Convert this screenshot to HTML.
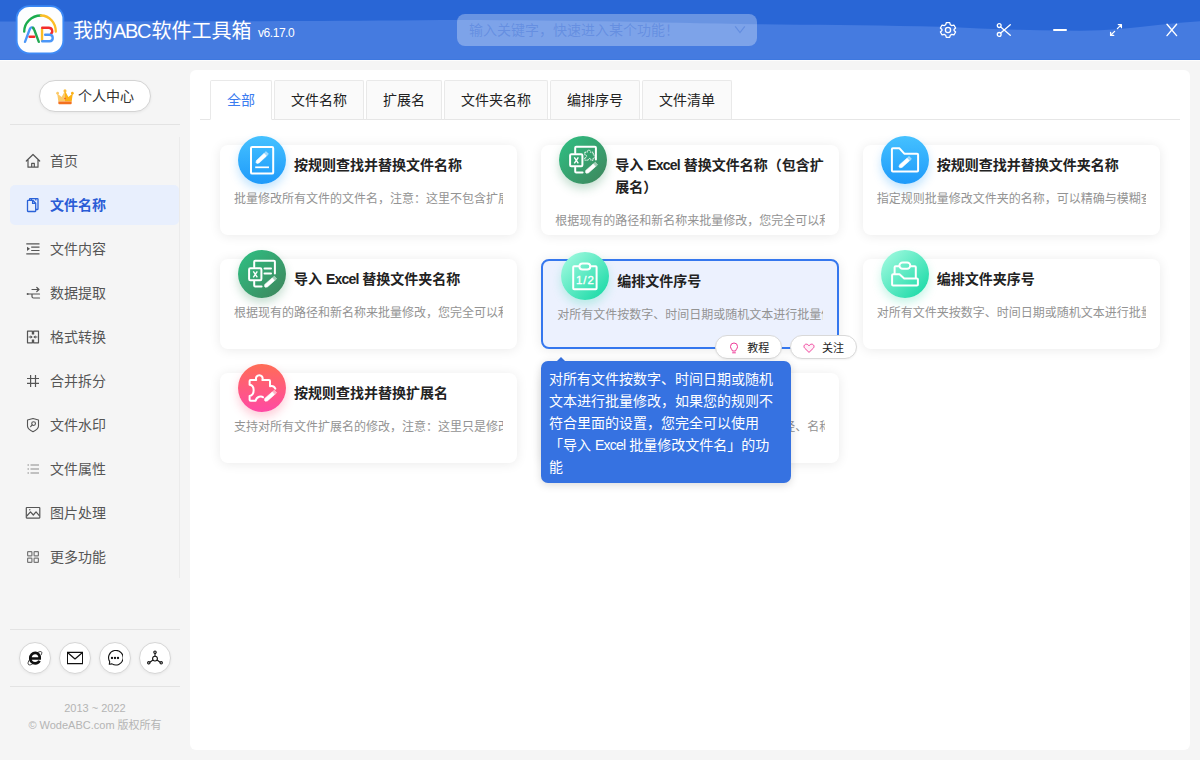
<!DOCTYPE html>
<html lang="zh-CN">
<head>
<meta charset="utf-8">
<title>我的ABC软件工具箱</title>
<style>
*{box-sizing:border-box;margin:0;padding:0}
html,body{width:1200px;height:760px;overflow:hidden}
body{background:#f5f5f5;font-family:"Liberation Sans","Noto Sans CJK SC",sans-serif;font-size:14px;color:#333;position:relative}
.abs{position:absolute}
/* header */
#hd{position:absolute;left:0;top:0;width:1200px;height:60px;background:#457be0;overflow:hidden}
#hd svg.wave{position:absolute;left:0;top:0}
#logo{position:absolute;left:10px;top:0;width:60px;height:60px}
#title{position:absolute;left:73px;top:14.800px;font-size:20px;line-height:32px;color:#fff;white-space:nowrap}
#title i{font-style:normal;letter-spacing:-1.3px;margin-right:1.3px}
#ver{position:absolute;left:258px;top:24px;font-size:12px;line-height:18px;color:#fff;white-space:nowrap;letter-spacing:-0.450px}
#search{position:absolute;left:457px;top:14px;width:300px;height:32px;border-radius:8px;background:rgba(255,255,255,.3);color:rgba(45,95,205,.3);font-size:14px;line-height:32px;padding-left:12px;white-space:nowrap}
.hi{position:absolute;top:22px;width:16px;height:16px}
/* sidebar */
#user{position:absolute;left:39px;top:80px;width:112px;height:32px;border:1px solid #d4d4d4;border-radius:16px;background:#fff;font-size:14px;line-height:30px;color:#333;white-space:nowrap;box-shadow:0 1px 3px rgba(0,0,0,.06)}
#user span{position:absolute;left:38px;top:0}
.sep{position:absolute;left:10px;width:170px;height:1px;background:#e3e3e3}
#menu{position:absolute;left:10px;top:137px;width:170px;height:441px;border-right:1px solid #ebebeb}
.mi{position:absolute;left:0;width:168.700px;height:40px;border-radius:5px;font-size:14px;line-height:40px;color:#555;white-space:nowrap}
.mi span{position:absolute;left:40px;top:0}
.mi svg{position:absolute;left:15px;top:12px;width:16px;height:16px}
.mi.on{background:#e8effd;color:#2a5cd6;font-weight:bold}
.circ{position:absolute;top:642px;width:32px;height:32px;border-radius:16px;border:1px solid #d6d6d6;background:#fff;box-shadow:0 1px 3px rgba(0,0,0,.06)}
.circ svg{position:absolute;left:7px;top:7px;width:16px;height:16px}
.foot{position:absolute;left:0;width:190px;text-align:center;font-size:11px;line-height:16px;color:#b4b4b4;white-space:nowrap}
/* main */
#main{position:absolute;left:190px;top:70px;width:1000px;height:680px;background:#fff;border-radius:6px}
#tabline{position:absolute;left:200px;top:119px;width:980px;height:1px;background:#e6e6e6}
.tab{position:absolute;top:80px;height:40px;border:1px solid #e9e9e9;border-bottom:1px solid #e6e6e6;border-radius:2px 2px 0 0;background:#fafafa;font-size:14px;line-height:38px;text-align:center;color:#222;white-space:nowrap}
.tab.on{background:#fff;color:#3b7cf0;border-bottom-color:#fff}
.card{position:absolute;width:297.33px;height:90px;border-radius:8px;background:#fff;box-shadow:0 1px 12px rgba(0,0,0,.085)}
.card.sel{border:2px solid #3577ee;background:#ecf1fe}
.ic{position:absolute;left:18px;top:-9px;width:48px;height:48px;border-radius:24px}
.ic svg{position:absolute;left:0;top:0;width:48px;height:48px}
.ic.blue{background:linear-gradient(180deg,#45c1ff,#1e9afa);box-shadow:0 5px 10px rgba(40,160,250,.28)}
.ic.green{background:linear-gradient(135deg,#30bb80 10%,#3e875d 95%);box-shadow:0 5px 10px rgba(50,140,90,.28)}
.ic.mint{background:linear-gradient(135deg,#9df9de 8%,#1cdaa7 92%);box-shadow:0 5px 10px rgba(50,220,170,.28)}
.ic.pink{background:linear-gradient(180deg,#ff6c56,#ff49a4);box-shadow:0 5px 10px rgba(250,80,120,.28)}
.tt{position:absolute;left:74px;top:9px;width:216px;font-size:14px;line-height:22px;font-weight:bold;color:#222}
.tt i{font-style:normal;letter-spacing:-0.8px}
.ds{position:absolute;left:14px;right:14px;height:18px;overflow:hidden;white-space:nowrap;font-size:12px;line-height:18px;color:#939393}
.pill{position:absolute;top:335.4px;height:23.3px;width:66.6px;border:1px solid #d9d9d9;border-radius:12px;background:#fff;font-size:11px;line-height:21.3px;color:#222;white-space:nowrap;box-shadow:0 1px 2px rgba(0,0,0,.05)}
.pill span{position:absolute;left:31px;top:1.500px}
.pill svg{position:absolute;left:12px;top:5.200px;width:12px;height:12px}
#tip{position:absolute;left:541px;top:361px;width:250px;height:122px;border-radius:7px;background:#3672e1;color:#fff;font-size:14px;line-height:22px;padding:6.700px 8px 0 8px;box-shadow:0 2px 8px rgba(0,0,0,.15)}
#tip i{font-style:normal;letter-spacing:-0.750px}
#tiparrow{position:absolute;left:556.500px;top:357px;width:0;height:0;border-left:4px solid transparent;border-right:4px solid transparent;border-bottom:4.500px solid #3672e1}
</style>
</head>
<body>
<div id="hd">
<svg class="wave" width="1200" height="60" viewBox="0 0 1200 60"><path d="M0 0H1200V21.3L1180 22.8L1160 24.8L1140 26.9L1120 29.0L1100 30.3L1080 30.8L1060 30.6L1040 30.3L1020 29.8L1000 29.2L980 28.4L960 27.4L940 26.7L920 26.2L900 25.9L880 25.6L860 25.3L840 25.1L820 24.8L800 24.7L780 24.4L760 24.2L740 23.9L720 23.6L700 23.2L680 22.8L660 22.4L640 22.0L620 21.6L600 21.3L580 21.0L560 20.7L540 20.5L520 20.3L500 20.2L480 20.1L460 20.1L440 20.1L420 20.3L400 20.4L380 20.6L360 20.7L340 20.8L320 20.9L300 21.1L280 21.1L260 21.2L240 21.2L220 21.3L200 21.3L180 21.3L160 21.3L140 21.3L120 21.4L100 21.4L80 21.4L60 21.4L40 21.4L20 21.4L0 21.4Z" fill="#2966d6"/></svg>
<svg id="logo" viewBox="0 0 760 760" fill="none" stroke-linecap="round" stroke-linejoin="round">
<rect x="72" y="66" width="616" height="620" rx="172" fill="#3d8cf8" opacity=".9"/>
<rect x="96" y="88" width="568" height="576" rx="150" fill="#fdfeff"/>
<path d="M180 400C180 290 270 198 390 196" stroke="#1aac4e" stroke-width="30"/>
<path d="M392 196C500 198 580 290 580 400" stroke="#fbbd26" stroke-width="30"/>
<path d="M190 530L250 370C262 340 285 340 297 362" stroke="#4a96f8" stroke-width="30"/>
<path d="M290 350C300 356 306 372 312 390L365 530" stroke="#22a853" stroke-width="30"/>
<path d="M248 466H308" stroke="#f42c2c" stroke-width="30"/>
<path d="M406 365V515" stroke="#fbbd26" stroke-width="30"/>
<path d="M408 352H490C540 352 545 410 520 425" stroke="#f42c2c" stroke-width="30"/>
<path d="M445 440H500C555 440 555 522 500 522H408" stroke="#4a96f8" stroke-width="30"/>
</svg>
<div id="title">我的<i>ABC</i>软件工具箱</div>
<div id="ver">v6.17.0</div>
<div id="search">输入关键字，快速进入某个功能！</div>
<svg class="abs" style="left:939px;top:21px" width="18" height="18" viewBox="0 0 18 18" fill="none" stroke="#fff" stroke-width="1.3" stroke-linejoin="round"><path d="M7.300 1.600H10.700L11.300 3.700L12.800 4.600L14.900 4.050L16.600 7L15.050 8.500V9.500L16.600 11L14.900 13.950L12.800 13.400L11.300 14.300L10.700 16.400H7.300L6.700 14.300L5.200 13.400L3.100 13.950L1.400 11L2.950 9.500V8.500L1.400 7L3.100 4.050L5.200 4.600L6.700 3.700Z"/><circle cx="9" cy="9" r="2.600"/></svg>
<svg class="abs" style="left:996px;top:22px" width="16" height="16" viewBox="0 0 16 16" fill="none" stroke="#fff" stroke-width="1.300" stroke-linecap="round"><circle cx="3.200" cy="3.600" r="1.900"/><circle cx="3.200" cy="12.400" r="1.900"/><path d="M4.700 4.900L14.300 13.300M4.700 11.100L14.300 2.700"/></svg>
<div class="abs" style="left:1053px;top:29px;width:14px;height:2px;background:#fff;border-radius:1px"></div>
<svg class="abs" style="left:1108px;top:22px" width="16" height="16" viewBox="0 0 16 16" fill="none" stroke="#fff" stroke-width="1.300" stroke-linecap="round" stroke-linejoin="round"><path d="M2.600 13.400L6.600 9.400M9.400 6.600L13.400 2.600M10.300 2.600H13.400V5.700M2.600 10.300V13.400H5.700"/></svg>
<svg class="abs" style="left:1165px;top:23px" width="14" height="14" viewBox="0 0 14 14" fill="none" stroke="#fff" stroke-width="1.400" stroke-linecap="round"><path d="M2 1.200L11.600 12.600M11.600 1.200L2 12.600"/></svg>
<svg class="abs" style="left:734px;top:25px" width="12" height="10" viewBox="0 0 12 10" fill="none" stroke="rgba(45,95,205,.32)" stroke-width="1.100"><path d="M1.200 1.300L6 7.700L10.800 1.300"/></svg>
</div>

<div class="abs" style="left:0;top:59px;width:1200px;height:1px;background:#3e78df"></div><div class="abs" style="left:0;top:60px;width:1200px;height:1px;background:#fdfdfd"></div>
<div id="user"><svg class="abs" style="left:16px;top:8px" width="18" height="16.500" viewBox="0 0 20 17" preserveAspectRatio="none"><path d="M2.600 12.800L1.300 4.600L6.300 8.200L10 1.800V12.800Z" fill="#fcc966"/><path d="M17.400 12.800L18.700 4.600L13.700 8.200L10 1.800V12.800Z" fill="#fcb116"/><circle cx="1.800" cy="4.300" r="1.500" fill="#fcc966"/><circle cx="18.200" cy="4.300" r="1.500" fill="#fcb116"/><circle cx="10" cy="2" r="1.700" fill="#fcbd3a"/><path d="M2.600 12.800H17.400V14.600Q17.400 15.600 16.400 15.600H3.600Q2.600 15.600 2.600 14.600Z" fill="#f3701e"/><path d="M10 8.700L10.900 9.800L10 10.900L9.100 9.800Z" fill="#ec3b2f"/></svg><span>个人中心</span></div>
<div class="sep" style="top:124px"></div>
<div id="menu">
<div class="mi" style="top:4px"><svg viewBox="0 0 16 16" fill="none" stroke="#555" stroke-width="1.200" stroke-linecap="round" stroke-linejoin="round"><path d="M1.300 8L8 1.500L14.700 8M3 6.800V14.200H13V6.800M6.700 14V10.300H9.300V14"/></svg><span>首页</span></div>
<div class="mi on" style="top:48px"><svg viewBox="0 0 16 16" fill="none" stroke="#2a62d8" stroke-width="1.300" stroke-linejoin="round"><path d="M4.500 3.300V2.200Q4.500 1.700 5 1.700H12.500Q13 1.700 13 2.200V12Q13 12.500 12.500 12.500H10.700"/><path d="M2.500 3.800Q2.500 3.300 3 3.300H7.800L10.700 6.200V14Q10.700 14.500 10.200 14.500H3Q2.500 14.500 2.500 14Z"/><path d="M7.600 3.500V6.400H10.500"/><path d="M6.400 1.700V3M10.800 1.700V3.400"/></svg><span>文件名称</span></div>
<div class="mi" style="top:92px"><svg viewBox="0 0 16 16" fill="none" stroke="#555" stroke-width="1.200"><path d="M1.300 2.900H14.500M6.200 6.200H14.500M6.200 9.500H14.500M1.300 12.900H14.500"/><path d="M2 5.800L5 7.850L2 9.900Z" fill="#555" stroke="none"/></svg><span>文件内容</span></div>
<div class="mi" style="top:136px"><svg viewBox="0 0 16 16" fill="none" stroke="#555" stroke-width="1.200" stroke-linecap="round" stroke-linejoin="round"><path d="M7 4.500H14M11.800 2.500L14 4.500L11.800 6.500"/><path d="M3.300 9H14.500M7 9V11.500Q7 13 8.500 13H14.500"/><circle cx="2.600" cy="9" r="1" fill="#555" stroke="none"/></svg><span>数据提取</span></div>
<div class="mi" style="top:180px"><svg viewBox="0 0 16 16" fill="none" stroke="#555" stroke-width="1.200" stroke-linejoin="round"><path d="M7.400 5.400V2.200H2.500V13.800H7.400V10.600M8.600 5.400V2.200H13.500V13.800H8.600V10.600"/><path d="M3.600 8H7.200M12.400 8H8.800" /><path d="M5.500 6.200L7.500 8L5.500 9.800ZM10.500 6.200L8.500 8L10.500 9.800Z" fill="#555" stroke="none"/></svg><span>格式转换</span></div>
<div class="mi" style="top:224px"><svg viewBox="0 0 16 16" fill="none" stroke="#555" stroke-width="1.200"><path d="M5.600 2V14M10.500 2V14M2 5.500H14M2 10.300H14"/></svg><span>合并拆分</span></div>
<div class="mi" style="top:268px"><svg viewBox="0 0 16 16" fill="none" stroke="#555" stroke-width="1.100" stroke-linejoin="round" stroke-linecap="round"><path d="M8 1.500L13.500 3V9Q13.500 12 8 14.700Q2.500 12 2.500 9V3Z"/><circle cx="8.600" cy="6.600" r="1.900"/><path d="M7.200 8L5.600 9.600"/></svg><span>文件水印</span></div>
<div class="mi" style="top:312px"><svg viewBox="0 0 16 16" fill="none" stroke="#8c8c8c" stroke-width="1.050"><path d="M5.500 4H14M5.500 8H14M5.500 12H14"/><path d="M2.500 4H4M2.500 8H4M2.500 12H4"/></svg><span>文件属性</span></div>
<div class="mi" style="top:356px"><svg viewBox="0 0 16 16" fill="none" stroke="#555" stroke-width="1.200" stroke-linejoin="round"><rect x="1.300" y="2.500" width="13.500" height="10.600" rx="0.500"/><path d="M1.800 11L5.500 6.800L8.300 10L11 6.800L14.500 10.800"/><circle cx="4.800" cy="4.800" r="0.700" fill="#555" stroke="none"/></svg><span>图片处理</span></div>
<div class="mi" style="top:400px"><svg viewBox="0 0 16 16" fill="none" stroke="#777" stroke-width="1.200" stroke-linejoin="round"><rect x="2.600" y="2.600" width="4.300" height="4.300" rx="0.700"/><rect x="9.100" y="2.600" width="4.300" height="4.300" rx="0.700"/><rect x="2.600" y="9.100" width="4.300" height="4.300" rx="0.700"/><rect x="9.100" y="9.100" width="4.300" height="4.300" rx="0.700"/></svg><span>更多功能</span></div>
</div>
<div class="sep" style="top:629px"></div>
<div class="circ" style="left:19px"><svg viewBox="0 0 16 16" fill="none" stroke="#111"><path d="M4.300 8.500H12.700C13 5 10.800 2.900 8.300 2.900C5.500 2.900 3.300 5.100 3.300 8.200C3.300 11 5.300 13.300 8.200 13.300C10.200 13.300 11.800 12.300 12.500 10.700" stroke-width="2.700"/><path d="M10.500 2.600C12.800 1.300 14.600 1.200 14.800 2.500C14.900 3.300 14.500 4.300 13.900 5.200M3 9C1 11.500 0.500 14 1.700 14.700C2.700 15.200 4.200 14.800 5.700 13.800" stroke-width="0.800"/></svg></div>
<div class="circ" style="left:59px"><svg viewBox="0 0 16 16" fill="none" stroke="#111" stroke-width="1.200" stroke-linejoin="round"><rect x="0.400" y="2.300" width="15.200" height="11.400"/><path d="M0.800 2.800L8 9L15.200 2.800"/></svg></div>
<div class="circ" style="left:99px"><svg viewBox="0 0 16 16" fill="none" stroke="#111" stroke-width="1.100" stroke-linejoin="round"><path d="M2.300 14.300L2.700 11.600A7.300 7.300 0 1 1 5 13.900Z"/><circle cx="5" cy="8" r="0.600" fill="#111"/><circle cx="8" cy="8" r="0.600" fill="#111"/><circle cx="11" cy="8" r="0.600" fill="#111"/></svg></div>
<div class="circ" style="left:139px"><svg viewBox="0 0 16 16" fill="none" stroke="#111" stroke-width="1.100"><circle cx="8" cy="8.600" r="2.400"/><circle cx="8" cy="2.200" r="1.200"/><circle cx="1.800" cy="12.800" r="1.200"/><circle cx="14.200" cy="12.800" r="1.200"/><path d="M8 3.400V6.200M6 10L2.800 12.200M10 10L13.200 12.200"/></svg></div>
<div class="sep" style="top:686px"></div>
<div class="foot" style="top:700px">2013 ~ 2022</div>
<div class="foot" style="top:717px">© WodeABC.com 版权所有</div>

<div id="main"></div>
<div id="tabline"></div>
<div class="tab on" style="left:210px;width:62px">全部</div>
<div class="tab" style="left:274px;width:90px">文件名称</div>
<div class="tab" style="left:366px;width:76px">扩展名</div>
<div class="tab" style="left:444px;width:104px">文件夹名称</div>
<div class="tab" style="left:550px;width:90px">编排序号</div>
<div class="tab" style="left:642px;width:90px">文件清单</div>

<div class="card" style="left:220px;top:145px"><div class="ic blue"><svg viewBox="0 0 48 48"><rect x="13" y="11" width="22.200" height="26.600" rx="1.200" stroke="#fff" fill="none" stroke-width="2" stroke-linejoin="round" stroke-linecap="round"/><path d="M18.92 27.47L20.99 27.05L28.63 19.89L26.17 17.26L18.53 24.42L17.97 26.45Z" fill="#fff" stroke="#fff" stroke-width="0.600" stroke-linejoin="round"/><path d="M29.00 19.55L30.53 18.11L28.07 15.49L26.54 16.92Z" fill="rgba(255,255,255,.5)" stroke="rgba(255,255,255,.5)" stroke-width="0.600" stroke-linejoin="round"/><path d="M17.200 31.300H31" stroke="#fff" stroke-width="1.700"/></svg></div><div class="tt">按规则查找并替换文件名称</div><div class="ds" style="top:45px">批量修改所有文件的文件名，注意：这里不包含扩展名</div></div>
<div class="card" style="left:541.33px;top:145px"><div class="ic green"><svg viewBox="0 0 48 48"><path d="M16.200 17V11.700Q16.200 10.700 17.200 10.700H35.900Q36.900 10.700 36.900 11.700V23.600M16.200 31.500V35.500Q16.200 36.500 17.200 36.500H23.600" stroke="#fff" fill="none" stroke-width="2" stroke-linejoin="round" stroke-linecap="round"/><rect x="11.100" y="18.300" width="12.300" height="11.900" rx="1.200" stroke="#fff" fill="none" stroke-width="2" stroke-linejoin="round" stroke-linecap="round"/><path d="M15.300 21.300L19.300 27.300M19.300 21.300L15.300 27.300" stroke="#fff" stroke-width="1.400" fill="none"/><path d="M25.800 16.200H28.300C27.300 13.500 32.300 13.500 31.300 16.200H34.200V19C36.800 18 36.800 22.800 34.200 21.800V24.200H31.800C32.500 21.900 28.700 21.900 29.400 24.200H25.800V21.500C28.200 22.200 28.200 18.300 25.800 19Z" stroke="#fff" fill="none" stroke-width="1" stroke-dasharray="1.300 0.700"/><path d="M27.31 37.29L29.39 36.93L36.74 30.47L34.36 27.77L27.01 34.23L26.39 36.24Z" fill="#fff" stroke="#fff" stroke-width="0.600" stroke-linejoin="round"/><path d="M37.11 30.14L38.69 28.75L36.31 26.05L34.73 27.44Z" fill="rgba(255,255,255,.5)" stroke="rgba(255,255,255,.5)" stroke-width="0.600" stroke-linejoin="round"/></svg></div><div class="tt">导入 <i>Excel</i> 替换文件名称（包含扩展名）</div><div class="ds" style="top:67px">根据现有的路径和新名称来批量修改，您完全可以利用</div></div>
<div class="card" style="left:862.67px;top:145px"><div class="ic blue"><svg viewBox="0 0 48 48"><path d="M10.900 13.300Q10.900 12.300 11.900 12.300H18.500L23.300 17.700H36.100Q37.100 17.700 37.100 18.700V34.600Q37.100 35.600 36.100 35.600H11.900Q10.900 35.600 10.900 34.600Z" stroke="#fff" fill="none" stroke-width="2" stroke-linejoin="round" stroke-linecap="round"/><path d="M18.91 31.79L20.99 31.43L28.54 24.77L26.16 22.07L18.61 28.73L17.99 30.74Z" fill="#fff" stroke="#fff" stroke-width="0.600" stroke-linejoin="round"/><path d="M28.92 24.44L30.49 23.05L28.11 20.35L26.53 21.74Z" fill="rgba(255,255,255,.5)" stroke="rgba(255,255,255,.5)" stroke-width="0.600" stroke-linejoin="round"/></svg></div><div class="tt">按规则查找并替换文件夹名称</div><div class="ds" style="top:45px">指定规则批量修改文件夹的名称，可以精确与模糊查找</div></div>

<div class="card" style="left:220px;top:259px"><div class="ic green"><svg viewBox="0 0 48 48"><path d="M16.200 17V11.700Q16.200 10.700 17.200 10.700H35.900Q36.900 10.700 36.900 11.700V23.600M16.200 31.500V35.500Q16.200 36.500 17.200 36.500H23.600" stroke="#fff" fill="none" stroke-width="2" stroke-linejoin="round" stroke-linecap="round"/><rect x="11.100" y="18.300" width="12.300" height="11.900" rx="1.200" stroke="#fff" fill="none" stroke-width="2" stroke-linejoin="round" stroke-linecap="round"/><path d="M15.300 21.300L19.300 27.300M19.300 21.300L15.300 27.300" stroke="#fff" stroke-width="1.400" fill="none"/><path d="M26.500 18.500H33M26.500 23.600H33" stroke="#fff" fill="none" stroke-width="2" stroke-linejoin="round" stroke-linecap="round"/><path d="M27.31 37.29L29.39 36.93L36.74 30.47L34.36 27.77L27.01 34.23L26.39 36.24Z" fill="#fff" stroke="#fff" stroke-width="0.600" stroke-linejoin="round"/><path d="M37.11 30.14L38.69 28.75L36.31 26.05L34.73 27.44Z" fill="rgba(255,255,255,.5)" stroke="rgba(255,255,255,.5)" stroke-width="0.600" stroke-linejoin="round"/></svg></div><div class="tt">导入 <i>Excel</i> 替换文件夹名称</div><div class="ds" style="top:45px">根据现有的路径和新名称来批量修改，您完全可以利用</div></div>
<div class="card sel" style="left:541.33px;top:259px"><div class="ic mint"><svg viewBox="0 0 48 48"><path d="M17.500 14.300H13.200Q12.200 14.300 12.200 15.300V36.300Q12.200 37.300 13.200 37.300H34.600Q35.600 37.300 35.600 36.300V15.300Q35.600 14.300 34.600 14.300H30.300" stroke="#fff" fill="none" stroke-width="2" stroke-linejoin="round" stroke-linecap="round"/><rect x="18.400" y="11.400" width="10.900" height="6.200" rx="3.100" stroke="#fff" fill="none" stroke-width="2" stroke-linejoin="round" stroke-linecap="round"/><text x="24.400" y="31.700" text-anchor="middle" font-family="Liberation Sans,sans-serif" font-size="11.500" fill="#fff" stroke="#fff" stroke-width="0.300" letter-spacing="0.900">1/2</text></svg></div><div class="tt">编排文件序号</div><div class="ds" style="top:45px">对所有文件按数字、时间日期或随机文本进行批量修改</div></div>
<div class="card" style="left:862.67px;top:259px"><div class="ic mint"><svg viewBox="0 0 48 48"><path d="M11.100 25.200Q11.100 24.200 12.100 24.200H18.500L23.200 28.400H35.900Q36.900 28.400 36.900 29.400V34.600Q36.900 35.600 35.900 35.600H12.100Q11.100 35.600 11.100 34.600Z" stroke="#fff" fill="none" stroke-width="2" stroke-linejoin="round" stroke-linecap="round"/><path d="M13.600 24V17.200Q13.600 16.200 14.600 16.200H18M30 16.200H33.800Q34.800 16.200 34.800 17.200V28" stroke="#fff" fill="none" stroke-width="2" stroke-linejoin="round" stroke-linecap="round"/><rect x="18.400" y="12.400" width="10.900" height="6.400" rx="3.200" stroke="#fff" fill="none" stroke-width="2" stroke-linejoin="round" stroke-linecap="round"/></svg></div><div class="tt">编排文件夹序号</div><div class="ds" style="top:45px">对所有文件夹按数字、时间日期或随机文本进行批量修改</div></div>

<div class="card" style="left:220px;top:373px"><div class="ic pink"><svg viewBox="0 0 48 48"><path d="M25 33.200C23.500 31.800 18.500 32 17.600 36.800H12.600Q11.600 36.800 11.600 35.800V31.900C17 31.200 17 21.400 11.600 20.800V17.100Q11.600 16.100 12.600 16.100H18.200C16.300 9.700 26.300 9.700 24.400 16.100H31Q32 16.100 32 17.100V22.300C34.500 21.700 36.300 22.600 37.300 24.600" stroke="#fff" fill="none" stroke-width="2" stroke-linejoin="round" stroke-linecap="round"/><path d="M27.31 37.29L29.39 36.93L36.74 30.47L34.36 27.77L27.01 34.23L26.39 36.24Z" fill="#fff" stroke="#fff" stroke-width="0.600" stroke-linejoin="round"/><path d="M37.11 30.14L38.69 28.75L36.31 26.05L34.73 27.44Z" fill="rgba(255,255,255,.5)" stroke="rgba(255,255,255,.5)" stroke-width="0.600" stroke-linejoin="round"/></svg></div><div class="tt">按规则查找并替换扩展名</div><div class="ds" style="top:45px">支持对所有文件扩展名的修改，注意：这里只是修改扩展名</div></div>
<div class="card" style="left:541.33px;top:373px"><div class="ic blue"></div><div class="tt">生成文件清单</div><div class="ds" style="top:45px">将所有文件或文件夹的信息导出，包含全路径、名称、大小等</div></div>

<div class="pill" style="left:715.300px"><svg viewBox="0 0 12 12" fill="none" stroke="#ee3a98" stroke-width="1" stroke-linecap="round"><path d="M4.400 8.600C4.400 7.500 2.500 6.900 2.500 4.500A3.500 3.500 0 0 1 9.500 4.500C9.500 6.900 7.600 7.500 7.600 8.600Z" stroke-linejoin="round"/><path d="M4.600 10.800H7.400"/></svg><span>教程</span></div>
<div class="pill" style="left:790px"><svg viewBox="-0.400 -0.600 12.800 12.800" fill="#fff0f7" stroke="#ee3a98" stroke-width="1" stroke-linejoin="round"><path d="M6 10.500L1.400 6C-0.200 4.200 1 1.700 3.100 1.700C4.400 1.700 5.400 2.500 6 3.500C6.600 2.500 7.600 1.700 8.900 1.700C11 1.700 12.200 4.200 10.600 6Z"/></svg><span>关注</span></div>
<div id="tiparrow"></div>
<div id="tip">对所有文件按数字、时间日期或随机文本进行批量修改，如果您的规则不符合里面的设置，您完全可以使用「导入 <i>Excel</i> 批量修改文件名」的功能</div>
</body>
</html>
